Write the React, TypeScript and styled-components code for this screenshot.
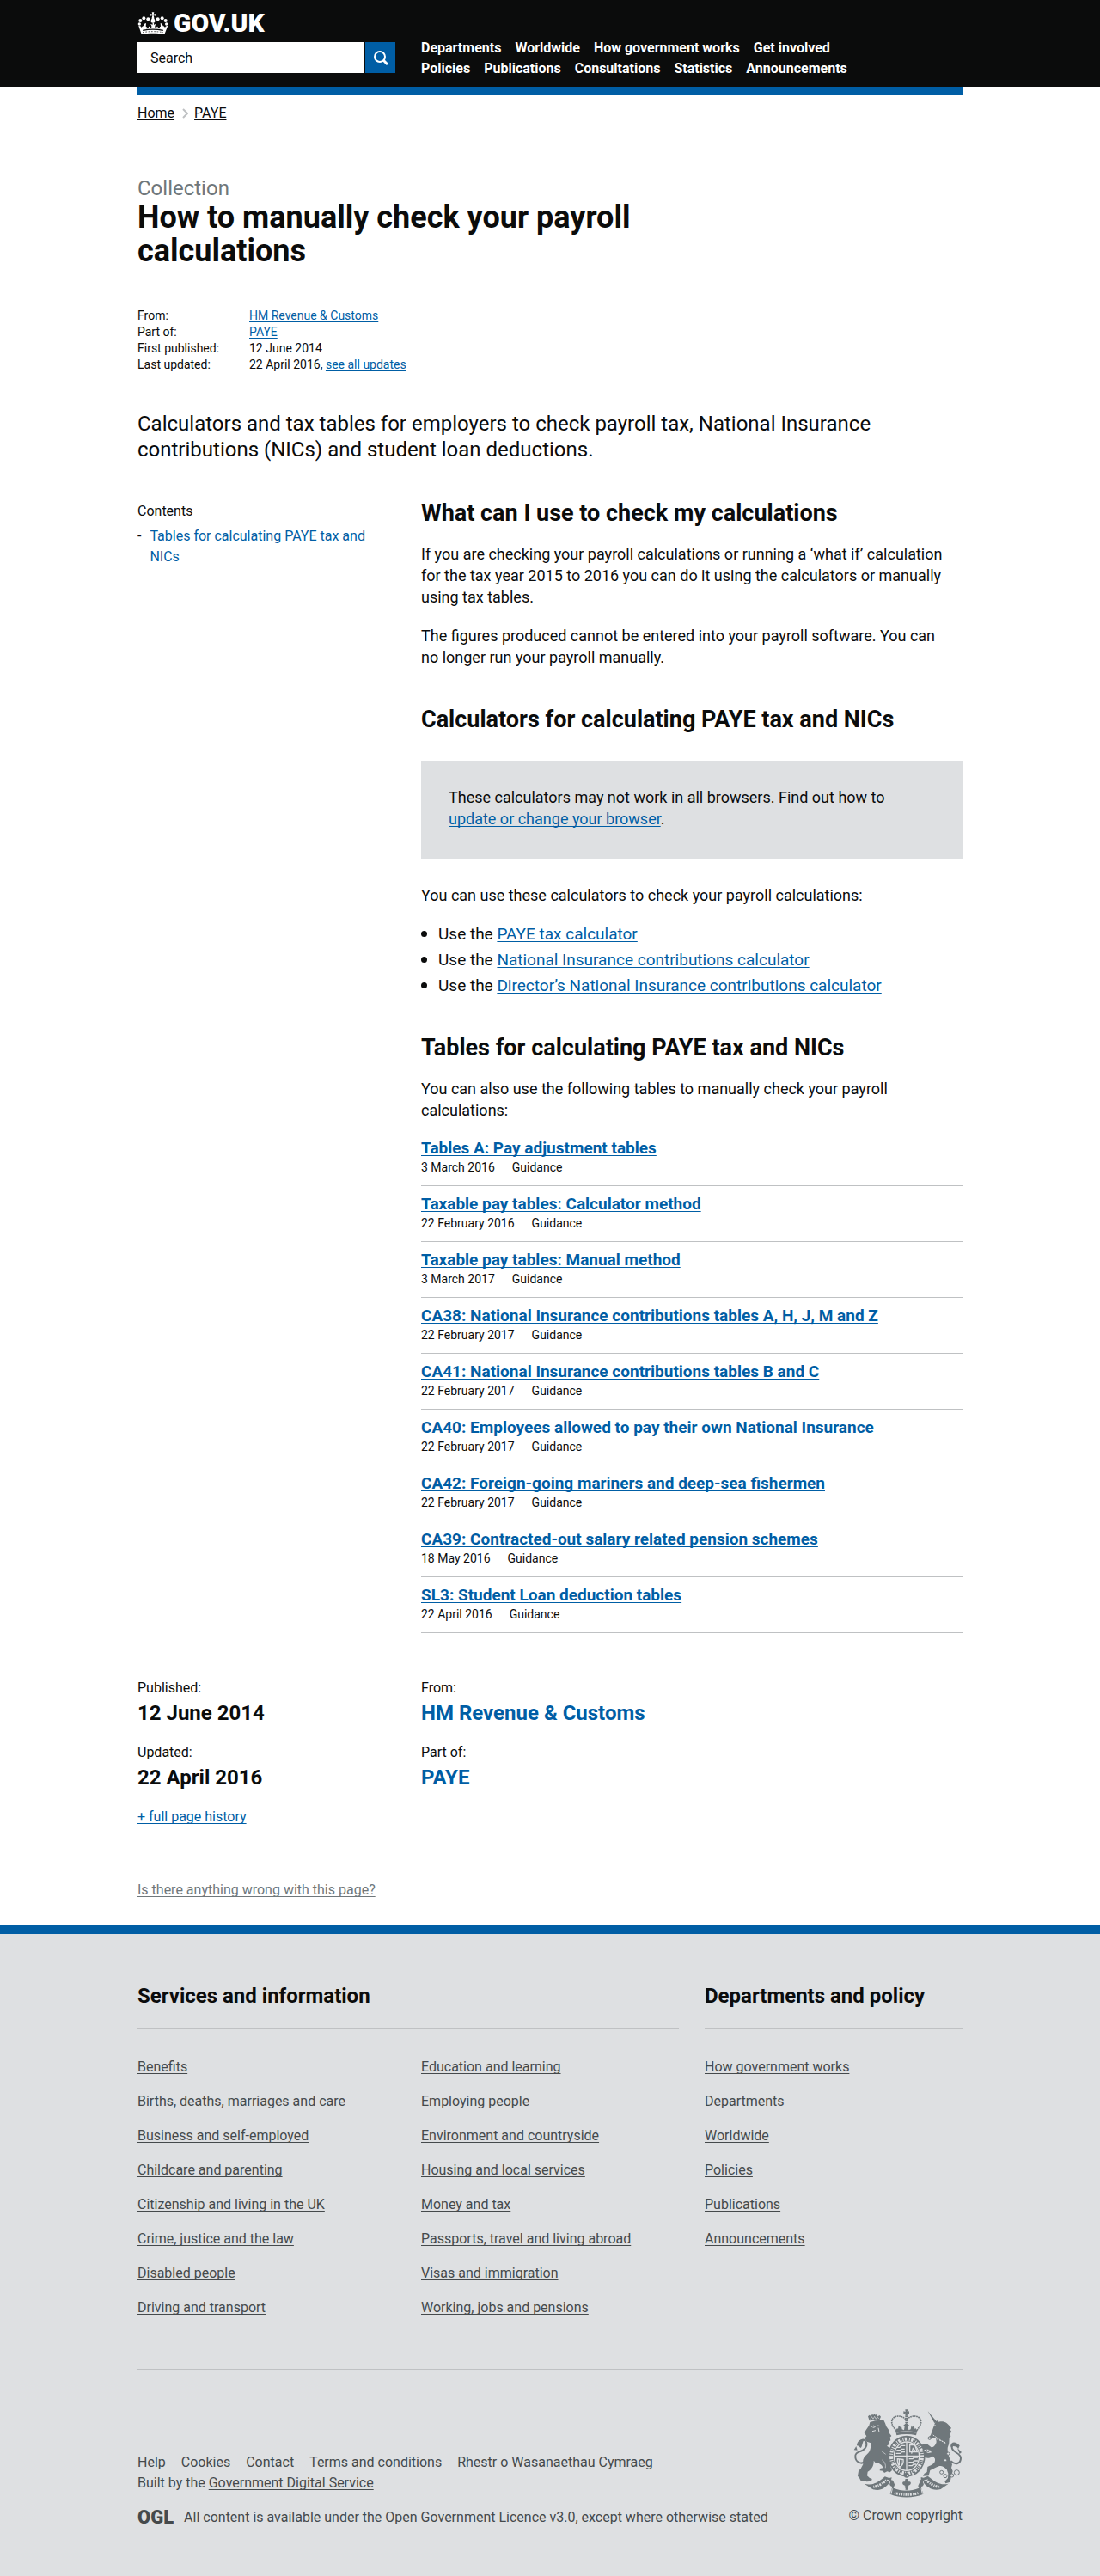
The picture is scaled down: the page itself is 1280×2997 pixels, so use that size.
import React from "react";
import styled, { createGlobalStyle, css } from "styled-components";

const color = {
  black: "#0b0c0c",
  blue: "#005ea5",
  grey: "#6f777b",
  panel: "#dee0e2",
  rule: "#bfc1c3",
  footer: "#454a4c",
};

const GlobalStyle = createGlobalStyle`
  *, *::before, *::after { box-sizing: border-box; }
  body {
    margin: 0;
    background: #fff;
    color: ${color.black};
    font-family: Roboto, "Liberation Sans", sans-serif;
    font-size: 16px;
    line-height: 20px;
  }
  h1, h2, h3, p, ul, dl, dd { margin: 0; padding: 0; }
  ul { list-style: none; }
  a {
    color: ${color.blue};
    text-decoration-thickness: 1px;
    text-underline-offset: 2px;
    text-decoration-skip-ink: none;
  }
`;

const Container = styled.div`
  max-width: 960px;
  margin: 0 auto;
`;

const thirds = css`
  display: grid;
  grid-template-columns: repeat(3, minmax(0, 1fr));
  column-gap: 30px;
`;

const Columns = styled(Container)<{ $top?: number }>`
  ${thirds}
  padding-top: ${(p) => p.$top ?? 0}px;
`;

const TwoThirds = styled.div`
  grid-column: span 2;
`;

/* Header */

const Header = styled.header`
  background: ${color.black};
  padding: 9px 0;
`;

const Logo = styled.a`
  display: flex;
  align-items: center;
  gap: 6px;
  height: 36px;
  color: #fff;
  font-size: 30px;
  font-weight: 900;
  line-height: 36px;
  text-decoration: none;
`;

const SearchForm = styled.form`
  display: flex;
  gap: 1px;
  margin-top: 4px;
`;

const SearchInput = styled.input`
  flex: 1;
  min-width: 0;
  height: 36px;
  padding: 0 15px;
  border: 0;
  border-radius: 0;
  background: #fff;
  font: inherit;
  color: ${color.black};
  &::placeholder {
    color: ${color.black};
    opacity: 1;
  }
`;

const SearchButton = styled.button`
  display: flex;
  align-items: center;
  justify-content: center;
  width: 35px;
  height: 36px;
  padding: 0;
  border: 0;
  background: ${color.blue};
  color: #fff;
`;

const Nav = styled.nav`
  grid-column: span 2;
  padding-top: 35px;
`;

const NavList = styled.ul`
  display: flex;
  flex-wrap: wrap;
  column-gap: 16px;
  max-width: 520px;
  line-height: 24px;
  font-weight: 700;
  a {
    color: #fff;
    text-decoration: none;
  }
`;

const BlueBar = styled(Container)`
  height: 10px;
  background: ${color.blue};
`;

/* Page heading */

const Breadcrumb = styled.ol`
  display: flex;
  align-items: center;
  gap: 9px;
  margin: 0;
  padding: 11px 0 0;
  list-style: none;
  a {
    color: ${color.black};
  }
  li {
    display: flex;
    align-items: center;
    gap: 7px;
  }
`;

const Kicker = styled.p`
  margin-top: 62px;
  color: ${color.grey};
  font-size: 24px;
  line-height: 30px;
`;

const Title = styled.h1`
  max-width: 640px;
  font-size: 36px;
  line-height: 39px;
  font-weight: 700;
`;

const Metadata = styled.dl`
  display: grid;
  grid-template-columns: 130px 1fr;
  margin-top: 46px;
  font-size: 14px;
  line-height: 19px;
`;

const Summary = styled.p`
  margin-top: 44px;
  font-size: 24px;
  line-height: 30px;
`;

/* Body */

const Contents = styled.nav`
  padding-top: 1px;
  line-height: 24px;
`;

const ContentsTitle = styled.h2`
  font-size: 16px;
  font-weight: 400;
`;

const ContentsItem = styled.li`
  display: flex;
  gap: 10px;
  padding-right: 30px;
  margin-top: 5px;
  a {
    text-decoration: none;
  }
`;

const SectionTitle = styled.h2`
  font-size: 27px;
  line-height: 30px;
  font-weight: 700;
  * + & {
    margin-top: 45px;
  }
`;

const Para = styled.p`
  margin-top: 20px;
  font-size: 18px;
  line-height: 25px;
`;

const Callout = styled.div`
  margin: 33px 0 30px;
  padding: 30px 32px 34px;
  background: ${color.panel};
  font-size: 18px;
  line-height: 25px;
`;

const BulletList = styled.ul`
  display: grid;
  gap: 5px;
  margin-top: 20px;
  font-size: 19px;
  line-height: 25px;
  li {
    display: flex;
    align-items: center;
  }
  li::before {
    content: "";
    width: 7px;
    height: 7px;
    margin-right: 13px;
    border-radius: 50%;
    background: ${color.black};
  }
`;

const DocList = styled.ul`
  margin-top: 11px;
`;

const Doc = styled.li`
  padding: 9px 0 11px;
  border-bottom: 1px solid ${color.rule};
`;

const DocTitle = styled.h3`
  font-size: 19px;
  line-height: 23px;
  font-weight: 700;
`;

const DocMeta = styled.ul`
  display: flex;
  gap: 20px;
  margin-top: 2px;
  font-size: 14px;
  line-height: 19px;
`;

const Fact = styled.dl`
  & + & {
    margin-top: 21px;
  }
  dd {
    margin-top: 4px;
    font-size: 24px;
    line-height: 30px;
    font-weight: 700;
  }
  dd a {
    text-decoration: none;
  }
`;

const HistoryLine = styled.p`
  margin-top: 21px;
`;

const Report = styled(Container)`
  padding: 65px 0 31px;
  a {
    color: ${color.grey};
  }
`;

/* Footer */

const Footer = styled.footer`
  padding: 57px 0 58px;
  border-top: 10px solid ${color.blue};
  background: ${color.panel};
  color: ${color.footer};
  a {
    color: ${color.footer};
  }
`;

const FooterSection = styled.section<{ $span: number }>`
  grid-column: span ${(p) => p.$span};
`;

const FooterTitle = styled.h2`
  padding-bottom: 23px;
  border-bottom: 1px solid ${color.rule};
  color: ${color.black};
  font-size: 24px;
  line-height: 30px;
  font-weight: 700;
`;

const FooterLists = styled.div<{ $columns: number }>`
  display: grid;
  grid-template-columns: repeat(${(p) => p.$columns}, minmax(0, 1fr));
  column-gap: 30px;
  margin-top: 34px;
`;

const LinkColumn = styled.ul`
  display: grid;
  align-content: start;
  row-gap: 20px;
`;

const FooterMeta = styled(Container)`
  display: flex;
  justify-content: space-between;
  align-items: flex-end;
  margin-top: 61px;
  padding-top: 45px;
  border-top: 1px solid ${color.rule};
  line-height: 24px;
`;

const MetaLinks = styled.ul`
  display: flex;
  flex-wrap: wrap;
  column-gap: 18px;
`;

const Licence = styled.div`
  display: flex;
  align-items: center;
  gap: 12px;
  margin-top: 16px;
`;

const OglMark = styled.a`
  font-size: 22px;
  font-weight: 900;
  && {
    text-decoration: none;
  }
`;

const Copyright = styled.a`
  display: flex;
  flex-direction: column;
  align-items: flex-end;
  gap: 9px;
  padding-bottom: 2px;
  && {
    text-decoration: none;
  }
`;

/* Drawings */

function Crown() {
  return (
    <svg width="36" height="27" viewBox="0 0 108 81" fill="#fff" aria-hidden="true">
      <path d="M50 1h8l-2 7 8-2v8l-8-2 2 9h-8l2-9-8 2V6l8 2z" />
      <path d="M51 20h6l4 9c2 6-2 9-7 9s-9-3-7-9z" />
      <circle cx="37" cy="25" r="6" />
      <circle cx="22" cy="22" r="6" />
      <circle cx="10" cy="30" r="6" />
      <circle cx="7" cy="42" r="5" />
      <circle cx="71" cy="25" r="6" />
      <circle cx="86" cy="22" r="6" />
      <circle cx="98" cy="30" r="6" />
      <circle cx="101" cy="42" r="5" />
      <path d="M4 48c5-1 8 1 10 6 2-3 4-5 7-5l3-8 6-2-1 11c4 0 5 5 1 8l7-1c2-3 1-6 4-7 3 0 3 4 1 6l6-1c2-3 2-9-3-12 4-1 6 1 7 3l1-8h4l1 8c1-2 3-4 7-3-5 3-5 9-3 12l6 1c-2-2-2-6 1-6 3 1 2 4 4 7l7 1c-4-3-3-8 1-8l-1-11 6 2 3 8c3 0 5 2 7 5 2-5 5-7 10-6L94 78c-25-5-55-5-80 0z" />
      <path d="M18 62c24-5 48-5 72 0l-1 4c-23-5-47-5-70 0z" fill={color.black} />
      <path d="M18 71c24-4 48-4 72 0" fill="none" stroke={color.black} strokeWidth="2" strokeDasharray="5 5" />
    </svg>
  );
}

function SearchIcon() {
  return (
    <svg width="18" height="18" viewBox="0 0 18 18" fill="none" stroke="currentColor" aria-hidden="true">
      <circle cx="8" cy="8" r="6" strokeWidth="2" />
      <path d="M12 12l5 5" strokeWidth="3" />
    </svg>
  );
}

function Chevron() {
  return (
    <svg width="7" height="12" viewBox="0 0 7 12" fill="none" stroke={color.rule} strokeWidth="2" aria-hidden="true">
      <path d="M1 1l5 5-5 5" />
    </svg>
  );
}

function Crest() {
  return (
    <svg width="127" height="104" viewBox="103 62 381 312" fill={color.grey} aria-hidden="true">
      {/* royal crown above the shield */}
      <path d="M284 66h9l-2 8 7-2v9l-7-2 1 9h-8l1-9-7 2v-9l7 2z" />
      <g fill="none" stroke={color.grey}>
        <path d="M286 100c-18-18-49-13-49 9 0 14 9 20 15 32M290 100c18-18 49-13 49 9 0 14-9 20-15 32" strokeWidth="5" strokeDasharray="5 2" />
        <path d="M288 88v52" strokeWidth="8" strokeDasharray="5 2" />
      </g>
      <path d="M250 139l6-8 3 3 2-13 6 6 3-6 3 14 7 3 2-13-4-4 10-8 10 8-4 4 2 13 7-3 3-14 3 6 6-6 2 13 3-3 6 8-4 17c-22-5-46-5-68 0z" />
      <path d="M255 146c22-5 44-5 66 0" fill="none" stroke={color.panel} strokeWidth="2" />

      {/* lion */}
      <path d="M159 105l-5-15 5-5 6 5 3-8 5 3 3-5 4 5 5-3 3 8 7-4 4 5-7 16c-11-5-22-5-33-2z" />
      <path d="M162 100l5-9 5 8 5-9 5 9 5-8 5 7" fill="none" stroke={color.panel} strokeWidth="2" />
      <path d="M158 121l3-11 18-5 30-2 5 11 4 11 8 11 3 13 7 9-5 5 2 11-7 4 1 10-7 5c11 6 19 14 17 25l-9 7 2 8-3 6c8 8 5 17 7 29l4 10-7 7-10-3-10 5-5-7-11-1 1-7 10-2c0-9-14-20-25-17l-7-9c1 18-7 31-21 39l-2 14 9 8 8 3-2 8-17 2-6-4-14 1-5-10-6-7 3-18 8-8 8-15c-3-17 3-25 14-35 14-12 12-25 13-39l-14-5-8-12 7-7-8-12z" />
      <path d="M164 127l11-5 4 5-8 2M184 122l10 1M169 142l12-3M190 130l3 15" fill="none" stroke={color.panel} strokeWidth="3" />
      <path d="M203 242c9 5 14 15 12 28M200 210l16 12" fill="none" stroke={color.panel} strokeWidth="2" />
      <path d="M147 247c-18 13-35 2-37-14-3-17 12-18 24-24 16-9 20-25 9-35-5-4-13-2-18 3" fill="none" stroke={color.grey} strokeWidth="6" />
      <path d="M140 172c-17-3-24 8-25 20 7 0 9 5 13 8 7-4 4-13 12-28zM105 207l8-13 4 14z" />

      {/* unicorn */}
      <path d="M363 72l32 37-9 4z" />
      <path d="M388 112l9-9 4 6c18-5 32 4 39 17l5 4-4 6 5 8-5 6 2 10-5 4-1 18c-1 10-6 14-5 24 1 18 7 29 11 39l5 13-3 11 5 12-5 16-4 22-16 5-3-7 11-12 1-16-5-14c-15-14-22-14-35-8l-23 11-5 19-20 1 5-9 9-5 2-18c17-8 28-13 26-28l-6-9c-11 4-16 9-28 5-11-6-11-19-1-23l10 7 13-2c-6-14-15-12-26-9-12-3-14-15-5-19l15-2 14 11c8 3 17-7 19-18l-2-15-9 1-11 5-6-6 8-9z" />
      <path d="M381 155l46 31M386 166l38 15" fill="none" stroke={color.panel} strokeWidth="3" strokeDasharray="6 3" />
      <circle cx="388" cy="121" r="2" fill={color.panel} />
      <path d="M443 246c19 17 35 6 35-11 0-19-31-18-31-37 0-12 13-15 24-5" fill="none" stroke={color.grey} strokeWidth="6" />
      <path d="M442 196c1-16 12-19 21-13l11 9-4 10c-9-9-17-9-28-6zM466 200l15 15-7 6z" />
      <g fill={color.panel} stroke={color.grey} strokeWidth="3">
        <circle cx="369" cy="166" r="5" />
        <circle cx="363" cy="209" r="5" />
        <circle cx="434" cy="220" r="5" />
        <circle cx="424" cy="243" r="5" />
        <circle cx="411" cy="285" r="6" />
        <circle cx="424" cy="298" r="6" />
        <circle cx="447" cy="296" r="6" />
        <circle cx="464" cy="286" r="9" />
      </g>

      {/* garter and shield */}
      <ellipse cx="289" cy="229" rx="65" ry="72" />
      <ellipse cx="289" cy="229" rx="54" ry="60" fill="none" stroke={color.panel} strokeWidth="12" strokeDasharray="3 4 7 3 2 4" />
      <ellipse cx="289" cy="229" rx="44" ry="50" stroke={color.panel} strokeWidth="4" />
      <path d="M289 179v100M245 228h88" stroke={color.panel} strokeWidth="4" />
      <g fill="none" stroke={color.panel} strokeWidth="4">
        <path d="M255 198h10l5-6h14M254 208h13l5-4h10M252 219h16l4-5h11" />
        <path d="M297 238h13l5-5h13M296 250h15l4-5h14M296 262h12l5-5h9" />
        <path d="M300 190h18l8 24h-26zM306 220l5-18 9 10" />
        <path d="M257 238l20 2c2 13-4 22-12 27-7-9-9-19-8-29zM263 240v20M270 241v17" />
      </g>
      <circle cx="289" cy="295" r="9" />
      <g fill={color.panel}>
        <circle cx="270" cy="290" r="3" />
        <circle cx="292" cy="297" r="3" />
        <circle cx="311" cy="290" r="3" />
      </g>

      {/* fleur-de-lis and scroll */}
      <path d="M285 308h8l3 10c8-3 10 6 4 11l-7 4 7 3-7 4v8h-8v-8l-7-4 7-3-7-4c-6-5-4-14 4-11z" />
      <path d="M141 325c30 8 51-6 72-25l15 5 9-2-2 9c10 2 15 8 13 15l-5 13c29 12 60 12 89 0l-6-13c-2-8 5-14 13-16v-9l9 2 15-6c22 18 43 35 72 27l-27 19c-28 9-49-9-58-20l-4 9-7 3 8 25c-35 15-81 15-116 0l8-25-7-4-4-8c-16 17-32 29-58 20z" fillRule="evenodd" />
      <path d="M250 309h76l10 8-10 22c-24 8-50 8-74 0l-9-21z" fill={color.panel} />
      <path d="M285 308h8l3 10c8-3 10 6 4 11l-7 4 5 3-5 4v5h-8v-5l-5-4 5-3-7-4c-6-5-4-14 4-11z" />
      <path d="M220 312c10 0 13 7 9 13M358 312c-10 0-13 7-9 13M239 342l-4 19M340 342l4 19" fill="none" stroke={color.panel} strokeWidth="3" />
      <g fill="none" stroke={color.panel} strokeWidth="9" strokeDasharray="3 3 6 4">
        <path d="M173 336c19-2 33-13 46-24M358 312c15 15 29 23 47 25M247 357c27 8 58 8 85 0" />
      </g>
    </svg>
  );
}

/* Content */

const navItems = [
  "Departments",
  "Worldwide",
  "How government works",
  "Get involved",
  "Policies",
  "Publications",
  "Consultations",
  "Statistics",
  "Announcements",
];

const calculators = [
  "PAYE tax calculator",
  "National Insurance contributions calculator",
  "Director’s National Insurance contributions calculator",
];

const documents = [
  { title: "Tables A: Pay adjustment tables", date: "3 March 2016" },
  { title: "Taxable pay tables: Calculator method", date: "22 February 2016" },
  { title: "Taxable pay tables: Manual method", date: "3 March 2017" },
  { title: "CA38: National Insurance contributions tables A, H, J, M and Z", date: "22 February 2017" },
  { title: "CA41: National Insurance contributions tables B and C", date: "22 February 2017" },
  { title: "CA40: Employees allowed to pay their own National Insurance", date: "22 February 2017" },
  { title: "CA42: Foreign-going mariners and deep-sea fishermen", date: "22 February 2017" },
  { title: "CA39: Contracted-out salary related pension schemes", date: "18 May 2016" },
  { title: "SL3: Student Loan deduction tables", date: "22 April 2016" },
];

const services = [
  [
    "Benefits",
    "Births, deaths, marriages and care",
    "Business and self-employed",
    "Childcare and parenting",
    "Citizenship and living in the UK",
    "Crime, justice and the law",
    "Disabled people",
    "Driving and transport",
  ],
  [
    "Education and learning",
    "Employing people",
    "Environment and countryside",
    "Housing and local services",
    "Money and tax",
    "Passports, travel and living abroad",
    "Visas and immigration",
    "Working, jobs and pensions",
  ],
];

const policy = [
  ["How government works", "Departments", "Worldwide", "Policies", "Publications", "Announcements"],
];

const metaLinks = ["Help", "Cookies", "Contact", "Terms and conditions", "Rhestr o Wasanaethau Cymraeg"];

function LinkItems({ items }: { items: string[] }) {
  return (
    <>
      {items.map((item) => (
        <li key={item}>
          <a href="#">{item}</a>
        </li>
      ))}
    </>
  );
}

function FooterNav({ title, columns, span }: { title: string; columns: string[][]; span: number }) {
  return (
    <FooterSection $span={span}>
      <FooterTitle>{title}</FooterTitle>
      <FooterLists $columns={columns.length}>
        {columns.map((items) => (
          <LinkColumn key={items[0]}>
            <LinkItems items={items} />
          </LinkColumn>
        ))}
      </FooterLists>
    </FooterSection>
  );
}

export default function App() {
  return (
    <>
      <GlobalStyle />
      <Header>
        <Columns>
          <div>
            <Logo href="#">
              <Crown />
              GOV.UK
            </Logo>
            <SearchForm role="search" onSubmit={(e) => e.preventDefault()}>
              <SearchInput type="search" aria-label="Search" placeholder="Search" />
              <SearchButton type="submit" aria-label="Search">
                <SearchIcon />
              </SearchButton>
            </SearchForm>
          </div>
          <Nav aria-label="Top level">
            <NavList>
              <LinkItems items={navItems} />
            </NavList>
          </Nav>
        </Columns>
      </Header>
      <BlueBar />

      <main>
        <Container>
          <Breadcrumb>
            <li>
              <a href="#">Home</a>
            </li>
            <li>
              <Chevron />
              <a href="#">PAYE</a>
            </li>
          </Breadcrumb>
          <Kicker>Collection</Kicker>
          <Title>How to manually check your payroll calculations</Title>
          <Metadata>
            <dt>From:</dt>
            <dd>
              <a href="#">HM Revenue &amp; Customs</a>
            </dd>
            <dt>Part of:</dt>
            <dd>
              <a href="#">PAYE</a>
            </dd>
            <dt>First published:</dt>
            <dd>12 June 2014</dd>
            <dt>Last updated:</dt>
            <dd>
              22 April 2016, <a href="#">see all updates</a>
            </dd>
          </Metadata>
          <Summary>
            Calculators and tax tables for employers to check payroll tax, National Insurance contributions (NICs) and
            student loan deductions.
          </Summary>
        </Container>

        <Columns $top={44}>
          <Contents>
            <ContentsTitle>Contents</ContentsTitle>
            <ul>
              <ContentsItem>
                <span aria-hidden="true">-</span>
                <a href="#tables">Tables for calculating PAYE tax and NICs</a>
              </ContentsItem>
            </ul>
          </Contents>
          <TwoThirds>
            <SectionTitle>What can I use to check my calculations</SectionTitle>
            <Para>
              If you are checking your payroll calculations or running a ‘what if’ calculation for the tax year 2015 to
              2016 you can do it using the calculators or manually using tax tables.
            </Para>
            <Para>
              The figures produced cannot be entered into your payroll software. You can no&nbsp;longer run your payroll
              manually.
            </Para>
            <SectionTitle>Calculators for calculating PAYE tax and NICs</SectionTitle>
            <Callout>
              <p>
                These calculators may not work in all browsers. Find out how to{" "}
                <a href="#">update or change your browser</a>.
              </p>
            </Callout>
            <Para>You can use these calculators to check your payroll calculations:</Para>
            <BulletList>
              {calculators.map((name) => (
                <li key={name}>
                  <span>
                    Use the <a href="#">{name}</a>
                  </span>
                </li>
              ))}
            </BulletList>
            <SectionTitle id="tables">Tables for calculating PAYE tax and NICs</SectionTitle>
            <Para>You can also use the following tables to manually check your payroll calculations:</Para>
            <DocList>
              {documents.map((doc) => (
                <Doc key={doc.title}>
                  <DocTitle>
                    <a href="#">{doc.title}</a>
                  </DocTitle>
                  <DocMeta>
                    <li>{doc.date}</li>
                    <li>Guidance</li>
                  </DocMeta>
                </Doc>
              ))}
            </DocList>
          </TwoThirds>
        </Columns>

        <Columns $top={54}>
          <div>
            <Fact>
              <dt>Published:</dt>
              <dd>12 June 2014</dd>
            </Fact>
            <Fact>
              <dt>Updated:</dt>
              <dd>22 April 2016</dd>
            </Fact>
            <HistoryLine>
              <a href="#">+ full page history</a>
            </HistoryLine>
          </div>
          <TwoThirds>
            <Fact>
              <dt>From:</dt>
              <dd>
                <a href="#">HM Revenue &amp; Customs</a>
              </dd>
            </Fact>
            <Fact>
              <dt>Part of:</dt>
              <dd>
                <a href="#">PAYE</a>
              </dd>
            </Fact>
          </TwoThirds>
        </Columns>

        <Report>
          <a href="#">Is there anything wrong with this page?</a>
        </Report>
      </main>

      <Footer>
        <Columns>
          <FooterNav title="Services and information" columns={services} span={2} />
          <FooterNav title="Departments and policy" columns={policy} span={1} />
        </Columns>
        <FooterMeta>
          <div>
            <MetaLinks>
              <LinkItems items={metaLinks} />
            </MetaLinks>
            <p>
              Built by the <a href="#">Government Digital Service</a>
            </p>
            <Licence>
              <OglMark href="#">OGL</OglMark>
              <p>
                All content is available under the <a href="#">Open Government Licence v3.0</a>, except where otherwise
                stated
              </p>
            </Licence>
          </div>
          <Copyright href="#">
            <Crest />
            © Crown copyright
          </Copyright>
        </FooterMeta>
      </Footer>
    </>
  );
}
